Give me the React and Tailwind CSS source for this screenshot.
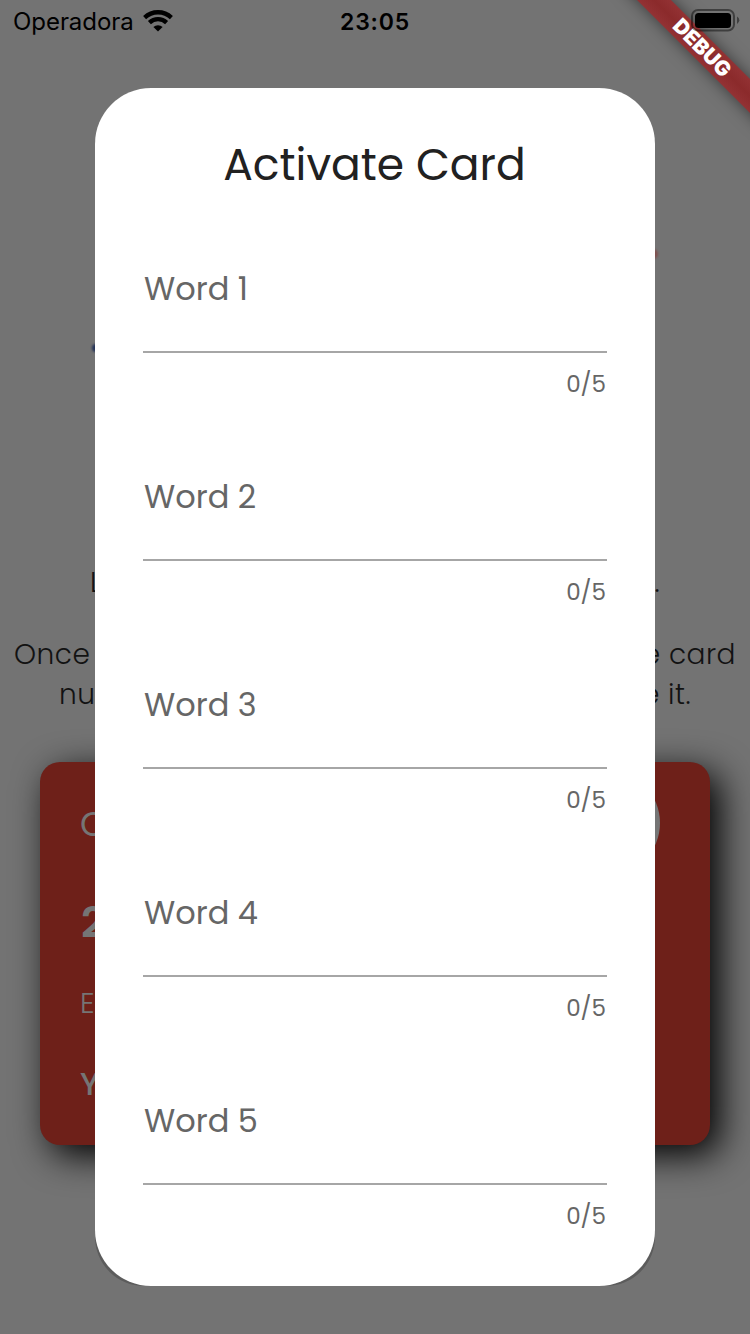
const fields = ['Word 1', 'Word 2', 'Word 3', 'Word 4', 'Word 5'];

function WifiIcon() {
  return (
    <svg width="30" height="22" viewBox="0 0 30 22" className="block">
      <g fill="none" stroke="#000" strokeWidth="4.3">
        <path d="M1.6 7.6 A19.5 19.5 0 0 1 28.4 7.6" />
        <path d="M6.4 12.6 A12.4 12.4 0 0 1 23.6 12.6" />
      </g>
      <path d="M15 21.6 L10.4 17.1 A6.6 6.6 0 0 1 19.6 17.1 Z" fill="#000" />
    </svg>
  );
}

function BatteryIcon() {
  return (
    <svg width="50" height="24" viewBox="0 0 50 24" className="block">
      <rect x="2" y="2" width="42" height="20.5" rx="6" fill="none" stroke="#000" strokeOpacity="0.45" strokeWidth="2" />
      <rect x="5" y="5" width="36" height="15" rx="3.5" fill="#000" />
      <path d="M47 8.5 Q49.3 9.8 49.3 12.3 Q49.3 14.8 47 16 Z" fill="#000" fillOpacity="0.45" />
    </svg>
  );
}

function StatusBar() {
  return (
    <div className="absolute inset-x-0 top-0 z-30 grid h-10 grid-cols-3 items-center font-['Inter',sans-serif] text-black [font-feature-settings:normal]">
      <div className="flex items-center gap-[9px] pl-[13px]">
        <span className="w-[121px] pt-0.5 text-[24px] leading-10 tracking-[-0.05px] whitespace-nowrap">Operadora</span>
        <WifiIcon />
      </div>
      <div className="pt-0.5 text-center text-[23px] leading-10 font-semibold tracking-[0.8px]">23:05</div>
      <div className="-mt-[3px] flex justify-end pr-[10px]">
        <BatteryIcon />
      </div>
    </div>
  );
}

function DebugBanner() {
  return (
    <div className="absolute top-0 right-0 z-20 h-[160px] w-[160px] overflow-hidden">
      <div className="absolute top-[36px] left-[12px] h-6 w-[200px] rotate-45 bg-[linear-gradient(#933234,#8b2a2b_50%,#933234)] text-center font-['Inter',sans-serif] text-[20.8px] leading-6 font-black text-white shadow-[0_0_16px_rgba(0,0,0,0.5)]">
        DEBUG
      </div>
    </div>
  );
}

function Page() {
  return (
    <div className="flex h-full flex-col text-[#121212]">
      <div className="relative h-[563px]">
        <div className="absolute top-[344px] left-[92px] h-2 w-3 rounded-full bg-[#243358] blur-[1px]" />
        <div className="absolute top-[249px] left-[648px] h-2.5 w-2.5 rounded-full bg-[#80504e] blur-[1px]" />
      </div>
      <div className="text-[28px] leading-10 font-light tracking-[0.5px]">
        <div className="flex justify-between pr-[90px] pl-[90px]">
          <span>L</span>
          <span>.</span>
        </div>
        <div className="mt-8 flex justify-between pr-[14px] pl-[14px]">
          <span>Once</span>
          <span>e card</span>
        </div>
        <div className="flex justify-between pr-[59px] pl-[59px]">
          <span>nu</span>
          <span>e it.</span>
        </div>
      </div>
      <div className="mx-10 mt-[47px] flex h-[383px] justify-between rounded-[20px] bg-[#6e2019] pt-[34px] pr-[50px] pl-10 text-[#757575] shadow-[10px_10px_36px_#000]">
        <div className="flex flex-col">
          <span className="h-[56px] text-[34px] leading-[56px]">C</span>
          <span className="mt-[43px] h-[56px] pl-px text-[42px] leading-[56px] font-semibold">2</span>
          <span className="mt-[24px] h-[56px] text-[29px] leading-[56px] font-light">E</span>
          <span className="mt-[25px] h-[56px] text-[32px] leading-[56px] font-medium">Y</span>
        </div>
        <div className="-mt-[26px] h-[106px] w-[106px] rounded-full bg-[#757575]" />
      </div>
    </div>
  );
}

function Field({ label }) {
  return (
    <label className="block h-[208px]">
      <span className="block h-[94px] border-b-2 border-[#a6a6a6] pl-px text-[32px] leading-[60px]">{label}</span>
      <span className="mt-[15px] block pr-[1px] text-right text-[23px] leading-8">0/5</span>
    </label>
  );
}

function ActivateDialog() {
  return (
    <div className="absolute top-[88px] left-[95px] z-10 w-[560px] rounded-t-[60px] rounded-b-[49px] bg-black/20">
      <div className="h-[1198px] rounded-[56px] bg-white px-12">
        <h1 className="pt-[47px] pr-px text-center text-[44px] leading-[60px] font-normal text-[#212121]">Activate Card</h1>
        <div className="pt-16 text-[#666]">
          {fields.map((label) => (
            <Field key={label} label={label} />
          ))}
        </div>
      </div>
    </div>
  );
}

export default function App() {
  return (
    <div className="relative h-[1334px] w-[750px] overflow-hidden bg-[#737373] font-['Poppins','Inter',sans-serif] [font-feature-settings:'cv11']">
      <Page />
      <ActivateDialog />
      <DebugBanner />
      <StatusBar />
    </div>
  );
}
